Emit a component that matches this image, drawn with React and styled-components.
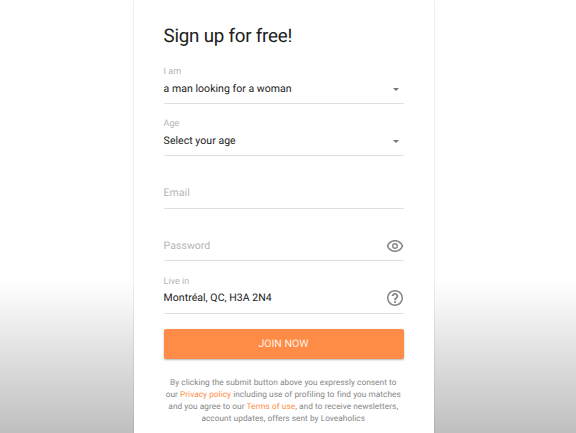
import React from "react";
import styled, { createGlobalStyle } from "styled-components";

const GlobalStyle = createGlobalStyle`
  * { box-sizing: border-box; }
  html, body { margin: 0; overflow: hidden; }
  body { font-family: Roboto, sans-serif; text-rendering: geometricPrecision; }
`;

const Page = styled.div`
  height: 433px;
  display: flex;
  justify-content: center;
  padding-right: 8px;
  background: linear-gradient(to bottom, #fff 0, #fff 278px, #fafafa 295px, #e3e3e3 347px, #bfbfbf 433px);
`;

const Card = styled.form`
  width: 300px;
  height: 433px;
  padding: 22px 30px 0;
  background: #fff;
  box-shadow: 0 0 1px rgba(0, 0, 0, 0.25), 0 1px 2px rgba(0, 0, 0, 0.08);
`;

const Title = styled.h1`
  margin: 0 0 0 -0.5px;
  height: 29px;
  font-size: 18.75px;
  line-height: 29px;
  font-weight: 400;
  letter-spacing: -0.22px;
  color: #212121;
  white-space: nowrap;
`;

const Field = styled.div`
  height: ${(p) => p.$height}px;
  display: flex;
  flex-direction: column;
  justify-content: flex-end;
  border-bottom: 1px solid #e0e0e0;
`;

const Label = styled.span`
  margin-left: -0.4px;
  font-size: 9px;
  line-height: 12px;
  letter-spacing: 0.03px;
  color: #b5b5b5;
`;

const ValueRow = styled.div`
  height: 25px;
  padding-bottom: ${(p) => p.$bottom || 3}px;
  display: flex;
  align-items: center;
  justify-content: space-between;
`;

const Value = styled.span`
  margin-left: -0.4px;
  font-size: 10.5px;
  line-height: 16px;
  letter-spacing: 0.04px;
  color: ${(p) => (p.$placeholder ? "#b5b5b5" : "#212121")};
`;

const Caret = styled.svg`
  width: 6px;
  height: 3px;
  margin-right: 5px;
  fill: #757575;
`;

const Icon = styled.svg`
  width: ${(p) => p.$size || 18}px;
  height: ${(p) => p.$size || 18}px;
  margin-right: ${(p) => p.$inset || 0}px;
  flex: none;
  fill: #858585;
`;

const JoinButton = styled.button`
  display: block;
  width: 240px;
  height: 30px;
  margin: 15px 0 18px;
  padding: 0 1px 1px 0;
  border: 0;
  border-radius: 2px;
  background: #ff8c46;
  box-shadow: 0 1px 2px rgba(0, 0, 0, 0.3);
  color: rgba(255, 255, 255, 0.9);
  font: 400 10.5px/29px Roboto, sans-serif;
  text-rendering: inherit;
`;

const Terms = styled.p`
  margin: 0 -4px 0 -5.5px;
  font-size: 8.25px;
  line-height: 12px;
  letter-spacing: 0.06px;
  text-align: center;
  white-space: nowrap;
  color: #858585;
`;

const TermsLink = styled.a`
  color: #ff8c46;
`;

const caret = <Caret viewBox="0 0 6 3"><path d="M0 0h6L3 3z" /></Caret>;

const eye = (
  <Icon viewBox="0 0 18 18">
    <path fillRule="evenodd" d="M9 3C5.2 3 2 5.3.7 9 2 12.700 5.200 15 9 15s7-2.300 8.300-6C16 5.300 12.800 3 9 3zm0 1.500c3 0 5.400 1.700 6.600 4.500-1.200 2.800-3.600 4.500-6.600 4.500S3.600 11.800 2.400 9C3.600 6.200 6 4.500 9 4.500zM9 6a3 3 0 1 0 0 6 3 3 0 0 0 0-6zm0 1.400a1.600 1.600 0 1 1 0 3.200 1.600 1.600 0 0 1 0-3.200z" />
  </Icon>
);

const help = (
  <Icon $size={16} $inset={1} viewBox="2 2 20 20">
    <path d="M10.900 16.200h2.400v2.200h-2.400v-2.200zM12 2C6.480 2 2 6.480 2 12s4.480 10 10 10 10-4.480 10-10S17.520 2 12 2zm0 18.100c-4.470 0-8.100-3.630-8.100-8.100s3.630-8.100 8.100-8.100 8.100 3.630 8.100 8.100-3.630 8.100-8.100 8.100zM12 5.700c-2.300 0-4.100 1.700-4.100 3.900h2.400c0-1 .8-1.800 1.800-1.800s1.700.8 1.700 1.800c0 1.900-2.900 2-2.900 5.200h2.400c0-2.100 2.900-2.500 2.900-5.200 0-2.200-1.900-3.900-4.200-3.900z" />
  </Icon>
);

const fields = [
  { label: "I am", value: "a man looking for a woman", icon: caret, height: 53 },
  { label: "Age", value: "Select your age", icon: caret, height: 52 },
  { value: "Email", placeholder: true, height: 53, bottom: 5 },
  { value: "Password", placeholder: true, icon: eye, height: 52 },
  { label: "Live in", value: "Montréal, QC, H3A 2N4", icon: help, height: 53, bottom: 5 },
];

export default function App() {
  return (
    <>
      <GlobalStyle />
      <Page>
        <Card>
          <Title>Sign up for free!</Title>
          {fields.map((f) => (
            <Field key={f.value} $height={f.height}>
              {f.label && <Label>{f.label}</Label>}
              <ValueRow $bottom={f.bottom}>
                <Value $placeholder={f.placeholder}>{f.value}</Value>
                {f.icon}
              </ValueRow>
            </Field>
          ))}
          <JoinButton type="button">JOIN NOW</JoinButton>
          <Terms>
            By clicking the submit button above you expressly consent to
            <br />
            our <TermsLink>Privacy policy</TermsLink> including use of profiling to find you matches
            <br />
            and you agree to our <TermsLink>Terms of use</TermsLink>, and to receive newsletters,
            <br />
            account updates, offers sent by Loveaholics
          </Terms>
        </Card>
      </Page>
    </>
  );
}
